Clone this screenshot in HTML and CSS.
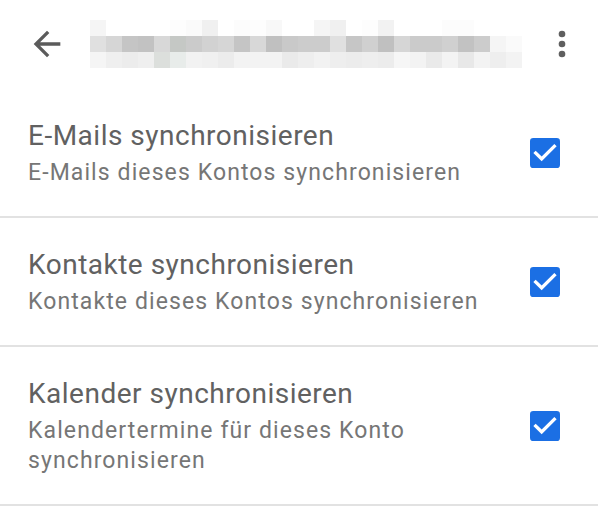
FILE: index.html
```html
<!DOCTYPE html>
<html lang="de">
<head>
<meta charset="utf-8">
<title>Konto synchronisieren</title>
<link rel="stylesheet" href="styles.css">
</head>
<body>
<div class="screen">
  <header class="toolbar">
    <svg class="icon back" viewBox="0 0 24 24"><path d="M20 11H7.83l5.59-5.59L12 4l-8 8 8 8 1.41-1.41L7.83 13H20v-2z"/></svg>
    <div class="blur" aria-label="Kontoname (unkenntlich)">
      <div class="blur-row r1"></div>
      <div class="blur-row r2"></div>
      <div class="blur-row r3"></div>
    </div>
    <svg class="icon more" viewBox="0 0 24 24"><circle cx="12" cy="6" r="2"/><circle cx="12" cy="12" r="2"/><circle cx="12" cy="18" r="2"/></svg>
  </header>

  <div class="list">
    <div class="item">
      <div class="text">
        <div class="title">E-Mails synchronisieren</div>
        <div class="sub">E-Mails dieses Kontos synchronisieren</div>
      </div>
      <svg class="check" viewBox="0 0 24 24"><rect x="3" y="3" width="18" height="18" rx="2" class="box"/><path class="tick" d="M10 17l-5-5 1.41-1.41L10 14.17l7.59-7.59L19 8l-9 9z"/></svg>
    </div>
    <div class="item">
      <div class="text">
        <div class="title">Kontakte synchronisieren</div>
        <div class="sub">Kontakte dieses Kontos synchronisieren</div>
      </div>
      <svg class="check" viewBox="0 0 24 24"><rect x="3" y="3" width="18" height="18" rx="2" class="box"/><path class="tick" d="M10 17l-5-5 1.41-1.41L10 14.17l7.59-7.59L19 8l-9 9z"/></svg>
    </div>
    <div class="item">
      <div class="text">
        <div class="title">Kalender synchronisieren</div>
        <div class="sub">Kalendertermine für dieses Konto synchronisieren</div>
      </div>
      <svg class="check" viewBox="0 0 24 24"><rect x="3" y="3" width="18" height="18" rx="2" class="box"/><path class="tick" d="M10 17l-5-5 1.41-1.41L10 14.17l7.59-7.59L19 8l-9 9z"/></svg>
    </div>
  </div>
</div>
</body>
</html>
```

FILE: styles.css
```css
* { box-sizing: border-box; }
html, body { margin: 0; padding: 0; background: #ffffff; }
body {
  font-family: Roboto, "Noto Sans", "Liberation Sans", sans-serif;
  width: 598px;
  height: 525px;
  overflow: hidden;
}
.screen { width: 598px; }

.toolbar {
  height: 89px;
  display: flex;
  align-items: center;
  padding: 0 16px 2px 27px;
}
.icon { width: 40px; height: 40px; fill: #5b5b5b; flex: none; }
.more { margin-left: auto; fill: #5f5f5f; }

.blur {
  margin-left: 23px;
  width: 432px;
  display: flex;
  flex-direction: column;
}
.blur-row { height: 16px; }
.r1 {
  background: linear-gradient(to right,
    #f5f5f5 0 16px, #fff 16px 80px, #fdfdfd 80px 96px, #fafafa 96px 112px,
    #f0f0f0 112px 128px, #fff 128px 144px, #fcfcfc 144px 160px, #fdfdfd 160px 176px,
    #f8f8f8 176px 192px, #fff 192px 224px, #f5f5f5 224px 240px, #f0f0f0 240px 256px,
    #fff 256px 272px, #fdfdfd 272px 288px, #f2f2f2 288px 304px, #fff 304px 352px,
    #fcfcfc 352px 384px, #fff 384px 432px);
}
.r2 {
  background: linear-gradient(to right,
    #e0e0e0 0 16px, #d6d6d6 16px 32px, #c5c5c5 32px 48px, #c2c2c2 48px 64px,
    #d8d8d8 64px 80px, #c5c8c5 80px 96px, #cbcbcb 96px 112px, #d2d2d2 112px 128px,
    #d6d6d6 128px 144px, #c5c5c5 144px 160px, #d8d8d8 160px 176px, #c0c0c0 176px 192px,
    #c9c9c9 192px 208px, #cccccc 208px 240px, #e0e0e0 240px 256px, #c6c6c6 256px 272px,
    #d0d0d0 272px 288px, #c0c0c0 288px 304px, #d6d6d6 304px 320px, #cbcbcb 320px 352px,
    #d0d0d0 352px 368px, #c2c2c2 368px 384px, #cccccc 384px 400px, #f5f5f5 400px 416px,
    #fafafa 416px 432px);
}
.r3 {
  background: linear-gradient(to right,
    #f5f5f5 0 16px, #efefef 16px 32px, #ececec 32px 48px, #efefef 48px 64px,
    #dcdfdc 64px 80px, #e8ecea 80px 96px, #f2f2f2 96px 112px, #f0f0f0 112px 128px,
    #ececec 128px 144px, #f3f3f3 144px 192px, #eaeaea 192px 208px, #eeeeee 208px 224px,
    #f2f2f2 224px 240px, #eeeeee 240px 256px, #ececec 256px 272px, #eeeeee 272px 288px,
    #ececec 288px 304px, #f6f6f6 304px 320px, #f3f3f3 320px 336px, #eaeaea 336px 352px,
    #f3f3f3 352px 368px, #e8e8e8 368px 384px, #f3f3f3 384px 400px, #eeeeee 400px 416px,
    #f3f3f3 416px 432px);
}

.item {
  display: flex;
  align-items: center;
  gap: 24px;
  padding: 29px 33px 28px 28px;
  border-bottom: 2px solid #e2e2e2;
}
.text { flex: 1; min-width: 0; }
.title {
  font-size: 28px;
  line-height: 36px;
  letter-spacing: 0.5px;
  color: #616161;
}
.sub {
  margin-top: 4px;
  font-size: 23px;
  line-height: 30px;
  letter-spacing: 1.1px;
  color: #767676;
}
.check { width: 40px; height: 40px; flex: none; }
.check .box { fill: #1b6fe4; }
.check .tick { fill: #ffffff; }
```
